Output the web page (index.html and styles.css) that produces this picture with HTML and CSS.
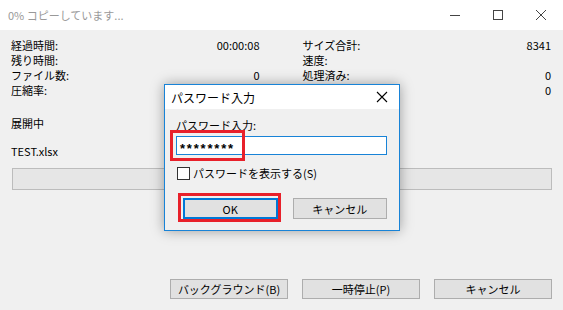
FILE: index.html
```html
<!DOCTYPE html>
<html lang="ja">
<head>
    <meta charset="UTF-8">
    <title>0% コピーしています...</title>
    <link rel="stylesheet" href="styles.css">
</head>
<body>
    <div class="window">
        <header class="titlebar">
            <span class="title">0% コピーしています...</span>
            <div class="controls">
                <span class="ctl"><svg width="12" height="12" viewBox="0 0 12 12"><path d="M1 6.5h10" stroke="#444" stroke-width="1"/></svg></span>
                <span class="ctl"><svg width="12" height="12" viewBox="0 0 12 12"><rect x="1.5" y="1.5" width="9" height="9" fill="none" stroke="#444" stroke-width="1"/></svg></span>
                <span class="ctl"><svg width="12" height="12" viewBox="0 0 12 12"><path d="M1 1L11 11M11 1L1 11" stroke="#444" stroke-width="1"/></svg></span>
            </div>
        </header>

        <div class="stats">
            <div class="col">
                <div class="row"><span>経過時間:</span><span>00:00:08</span></div>
                <div class="row"><span>残り時間:</span><span></span></div>
                <div class="row"><span>ファイル数:</span><span>0</span></div>
                <div class="row"><span>圧縮率:</span><span></span></div>
            </div>
            <div class="col">
                <div class="row"><span>サイズ合計:</span><span>8341</span></div>
                <div class="row"><span>速度:</span><span></span></div>
                <div class="row"><span>処理済み:</span><span>0</span></div>
                <div class="row"><span>圧縮後:</span><span>0</span></div>
            </div>
        </div>

        <p class="status">展開中</p>
        <p class="file">TEST.xlsx</p>
        <div class="progress"></div>

        <div class="actions">
            <button class="btn">バックグラウンド(B)</button>
            <button class="btn">一時停止(P)</button>
            <button class="btn">キャンセル</button>
        </div>
    </div>

    <div class="dialog">
        <div class="dlg-title">
            <span>パスワード入力</span>
            <svg width="12" height="12" viewBox="0 0 12 12"><path d="M1 1L11 11M11 1L1 11" stroke="#000" stroke-width="1.1"/></svg>
        </div>
        <div class="dlg-body">
            <label class="dlg-label">パスワード入力:</label>
            <div class="field">
                <span class="pw">********</span>
                <span class="mark mark-pw"></span>
            </div>
            <label class="check"><span class="box"></span>パスワードを表示する(S)</label>
            <div class="dlg-buttons">
                <button class="btn btn-ok">OK<span class="mark mark-ok"></span></button>
                <button class="btn">キャンセル</button>
            </div>
        </div>
    </div>
</body>
</html>
```

FILE: styles.css
```css
body {
    margin: 0;
    width: 563px;
    height: 310px;
    overflow: hidden;
    background-color: #f0f0f0;
    font-family: "Noto Sans CJK JP", "Liberation Sans", sans-serif;
    font-size: 11px;
    color: #000;
    position: relative;
}

.titlebar {
    height: 30px;
    background-color: #fff;
    display: flex;
    align-items: center;
    justify-content: space-between;
}

.title {
    padding-left: 8px;
    color: #999;
    font-size: 11px;
}

.controls {
    display: flex;
}

.ctl {
    width: 45px;
    height: 30px;
    display: flex;
    align-items: center;
    justify-content: center;
    margin-left: -2px;
}

.stats {
    display: flex;
    gap: 43px;
    padding: 8px 12px 0 11px;
}

.col {
    width: 249px;
}

.row {
    display: flex;
    justify-content: space-between;
    height: 15px;
    line-height: 15px;
}

.status {
    margin: 18px 0 0 11px;
    line-height: 15px;
}

.file {
    margin: 13px 0 0 11px;
    line-height: 15px;
}

.progress {
    margin: 9px 11px 0 12px;
    height: 20px;
    background-color: #e6e6e6;
    border: 1px solid #bcbcbc;
}

.actions {
    display: flex;
    justify-content: flex-end;
    gap: 14px;
    padding: 89px 11px 0 0;
}

.btn {
    width: 118px;
    height: 20px;
    padding: 0;
    background-color: #e1e1e1;
    border: 1px solid #adadad;
    font-family: inherit;
    font-size: 11px;
    color: #000;
    position: relative;
}

/* overlay dialog */
.dialog {
    position: absolute;
    left: 164px;
    top: 84px;
    width: 234px;
    height: 145px;
    background-color: #f0f0f0;
    border: 1px solid #1883d7;
    box-shadow: 0 0 12px rgba(0, 0, 0, 0.35);
}

.dlg-title {
    height: 24px;
    background-color: #fff;
    display: flex;
    align-items: center;
    justify-content: space-between;
    padding: 0 11px 0 6px;
    font-size: 12px;
}

.dlg-body {
    padding: 9px 12px 0 11px;
}

.dlg-label {
    display: block;
    line-height: 14px;
}

.field {
    margin-top: 4px;
    height: 17px;
    border: 1px solid #1883d7;
    background-color: #fff;
    position: relative;
    display: flex;
    align-items: center;
}

.pw {
    padding-left: 3px;
    font-family: "Liberation Sans", sans-serif;
    font-size: 13px;
    font-weight: bold;
    letter-spacing: 1.8px;
    padding-top: 5px;
}

.mark {
    position: absolute;
    border: 3px solid #e8202a;
}

.mark-pw {
    left: -7px;
    top: -7px;
    width: 69px;
    height: 25px;
}

.check {
    display: flex;
    align-items: center;
    margin-top: 11px;
    line-height: 14px;
}

.box {
    width: 11px;
    height: 11px;
    border: 1px solid #333;
    background-color: #fff;
    margin: 0 3px 0 1px;
}

.dlg-buttons {
    display: flex;
    gap: 15px;
    padding: 18px 0 0 7px;
}

.dlg-buttons .btn {
    width: 95px;
    height: 21px;
}

.btn-ok {
    border: 2px solid #0078d7 !important;
}

.mark-ok {
    left: -7px;
    top: -7px;
    width: 97px;
    height: 23px;
}
```
